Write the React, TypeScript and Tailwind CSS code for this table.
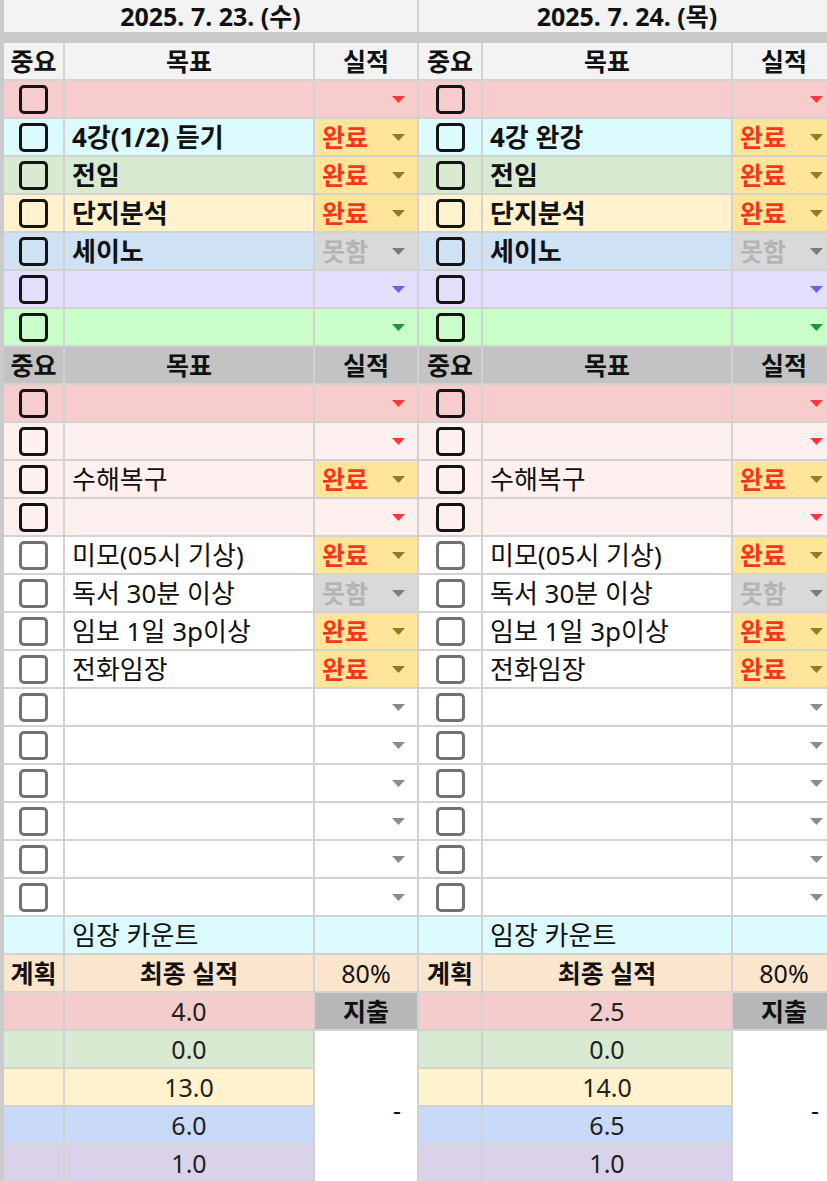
import React from "react";

type Status = "done" | "fail" | null;

type TaskRow = {
  bg: string;
  text?: string;
  bold?: boolean;
  status?: Status;
  arrow: string;
  box: "dark" | "light";
};

type DayData = {
  date: string;
  firstCol: string;
  top: TaskRow[];
  bottom: TaskRow[];
  totals: string[];
};

const RED = "bg-[#f7cccc]";
const PINK = "bg-[#fff0f0]";
const WHITE = "bg-white";

function topRows(lecture: string): TaskRow[] {
  return [
    { bg: RED, arrow: "text-[#f23a3a]", box: "dark" },
    { bg: "bg-[#dbfbff]", text: lecture, bold: true, status: "done", arrow: "", box: "dark" },
    { bg: "bg-[#d9ead3]", text: "전임", bold: true, status: "done", arrow: "", box: "dark" },
    { bg: "bg-[#fff2cc]", text: "단지분석", bold: true, status: "done", arrow: "", box: "dark" },
    { bg: "bg-[#cfe2f3]", text: "세이노", bold: true, status: "fail", arrow: "", box: "dark" },
    { bg: "bg-[#e4defd]", arrow: "text-[#6464ee]", box: "dark" },
    { bg: "bg-[#caffca]", arrow: "text-[#23943a]", box: "dark" }
  ];
}

function bottomRows(): TaskRow[] {
  const empty: TaskRow = { bg: WHITE, arrow: "text-[#8c8c8c]", box: "light" };
  return [
    { bg: RED, arrow: "text-[#f23a3a]", box: "dark" },
    { bg: PINK, arrow: "text-[#f23a3a]", box: "dark" },
    { bg: PINK, text: "수해복구", status: "done", arrow: "", box: "dark" },
    { bg: PINK, arrow: "text-[#f23a3a]", box: "dark" },
    { bg: WHITE, text: "미모(05시 기상)", status: "done", arrow: "", box: "light" },
    { bg: WHITE, text: "독서 30분 이상", status: "fail", arrow: "", box: "light" },
    { bg: WHITE, text: "임보 1일 3p이상", status: "done", arrow: "", box: "light" },
    { bg: WHITE, text: "전화임장", status: "done", arrow: "", box: "light" },
    empty,
    empty,
    empty,
    empty,
    empty,
    empty
  ];
}

const days: DayData[] = [
  {
    date: "2025. 7. 23. (수)",
    firstCol: "grid-cols-[59px_248px_102px]",
    top: topRows("4강(1/2) 듣기"),
    bottom: bottomRows(),
    totals: ["4.0", "0.0", "13.0", "6.0", "1.0"]
  },
  {
    date: "2025. 7. 24. (목)",
    firstCol: "grid-cols-[62px_248px_102px]",
    top: topRows("4강 완강"),
    bottom: bottomRows(),
    totals: ["2.5", "0.0", "14.0", "6.5", "1.0"]
  }
];

const totalBgs = ["bg-[#f4cccc]", "bg-[#d9ead3]", "bg-[#fff2cc]", "bg-[#c9daf8]", "bg-[#d9d2e9]"];

function Arrow({ color }: { color: string }) {
  return (
    <svg width="13" height="7" viewBox="0 0 13 7" className={color}>
      <polygon points="0,0 13,0 6.5,7" fill="currentColor" />
    </svg>
  );
}

function CheckCell({ bg, box }: { bg: string; box: "dark" | "light" }) {
  return (
    <div className={`${bg} flex items-center justify-center`}>
      <span
        className={
          box === "dark"
            ? "h-[29px] w-[29px] rounded-[5px] border-[3.5px] border-[#141414]"
            : "h-[29px] w-[29px] rounded-[5px] border-[3px] border-[#727272]"
        }
      />
    </div>
  );
}

function StatusCell({ row }: { row: TaskRow }) {
  if (row.status === "done") {
    return (
      <div className="flex items-center justify-between bg-[#ffe599] pl-[7px] pr-[12px]">
        <span className="font-bold text-[#f2371d]">완료</span>
        <Arrow color="text-[#8f7d1f]" />
      </div>
    );
  }
  if (row.status === "fail") {
    return (
      <div className="flex items-center justify-between bg-[#d9d9d9] pl-[7px] pr-[12px]">
        <span className="font-bold text-[#b4b4b4]">못함</span>
        <Arrow color="text-[#7c7c7c]" />
      </div>
    );
  }
  return (
    <div className={`${row.bg} flex items-center justify-end pr-[12px]`}>
      <Arrow color={row.arrow} />
    </div>
  );
}

function TaskLine({ row }: { row: TaskRow }) {
  return (
    <>
      <CheckCell bg={row.bg} box={row.box} />
      <div
        className={`${row.bg} flex items-center whitespace-nowrap pl-[7px] text-[26px] ${row.bold ? "font-bold" : ""}`}
      >
        {row.text}
      </div>
      <StatusCell row={row} />
    </>
  );
}

function HeaderLine({ bg }: { bg: string }) {
  return (
    <>
      <div className={`${bg} flex items-center justify-center font-bold`}>중요</div>
      <div className={`${bg} flex items-center justify-center font-bold`}>목표</div>
      <div className={`${bg} flex items-center justify-center font-bold`}>실적</div>
    </>
  );
}

function Day({ day }: { day: DayData }) {
  return (
    <div className="flex shrink-0 flex-col">
      <div className="flex h-[33px] items-center justify-center border-r-2 border-[#d2d2d2] bg-[#f3f3f3] font-bold">
        {day.date}
      </div>
      <div className="h-[11px] bg-[#c9c9c9]" />
      <div className={`grid ${day.firstCol} auto-rows-[36px] gap-[2px] bg-[#d2d2d2] pr-[2px]`}>
        <HeaderLine bg="bg-[#f3f3f3]" />
        {day.top.map((row, i) => (
          <TaskLine key={`t${i}`} row={row} />
        ))}
        <HeaderLine bg="bg-[#c3c3c3]" />
        {day.bottom.map((row, i) => (
          <TaskLine key={`b${i}`} row={row} />
        ))}

        <div className="bg-[#dbfbff]" />
        <div className="flex items-center bg-[#dbfbff] pl-[7px] text-[26px]">임장 카운트</div>
        <div className="bg-[#dbfbff]" />

        <div className="flex items-center justify-center bg-[#fce5cd] font-bold">계획</div>
        <div className="flex items-center justify-center bg-[#fce5cd] font-bold">최종 실적</div>
        <div className="flex items-center justify-center bg-[#fce5cd]">80%</div>

        <div className={totalBgs[0]} />
        <div className={`${totalBgs[0]} flex items-center justify-center text-[#222]`}>{day.totals[0]}</div>
        <div className="flex items-center justify-center bg-[#b7b7b7] font-bold">지출</div>

        {day.totals.slice(1).map((value, i) => (
          <React.Fragment key={value + i}>
            <div className={totalBgs[i + 1]} />
            <div className={`${totalBgs[i + 1]} flex items-center justify-center text-[#222]`}>{value}</div>
            {i === 0 ? (
              <div className="row-span-4 flex items-center justify-end bg-white pr-[16px] pt-[8px]">-</div>
            ) : null}
          </React.Fragment>
        ))}
      </div>
    </div>
  );
}

export default function App() {
  return (
    <div className="flex h-[1181px] w-[827px] overflow-hidden bg-white font-['Noto_Sans','Noto_Sans_CJK_KR',sans-serif] text-[25px] leading-none text-[#111]">
      <div className="w-[4px] shrink-0 bg-[#cbcbcb]" />
      {days.map((day) => (
        <Day key={day.date} day={day} />
      ))}
    </div>
  );
}
